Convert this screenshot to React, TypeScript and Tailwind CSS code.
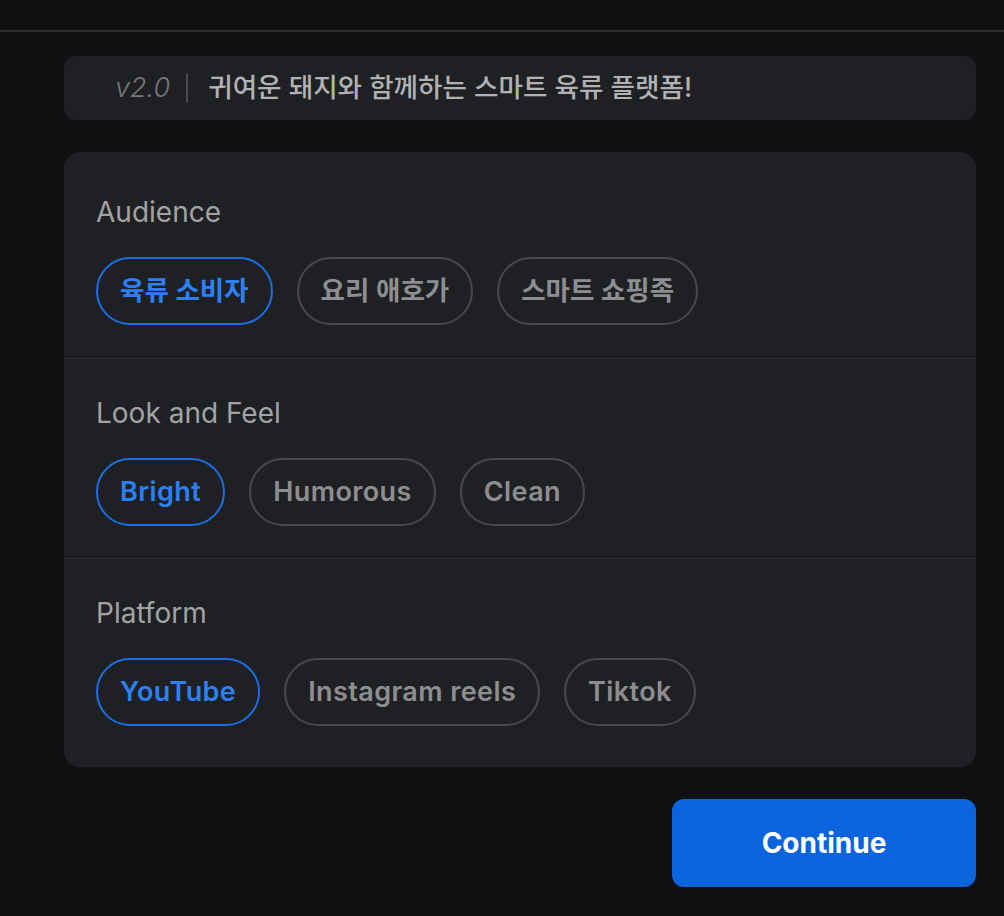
import { useState } from 'react';

const FONT = "font-['Inter','Noto_Sans_CJK_KR',sans-serif]";

const GROUPS = [
  { label: 'Audience', options: ['육류 소비자', '요리 애호가', '스마트 쇼핑족'] },
  { label: 'Look and Feel', options: ['Bright', 'Humorous', 'Clean'] },
  { label: 'Platform', options: ['YouTube', 'Instagram reels', 'Tiktok'] },
];

function Chip({ text, active, onClick }: { text: string; active: boolean; onClick: () => void }) {
  // hangul labels run a touch wider than latin ones at the same size
  const korean = /[가-힣]/.test(text);
  const size = korean ? 'text-[26.5px] font-semibold' : 'text-[27px] font-semibold tracking-[0.4px]';
  return (
    <button
      onClick={onClick}
      className={
        active
          ? `h-[68px] rounded-full border-2 border-[#1a6fe6] px-[22px] ${size} text-[#2b80f5]`
          : `h-[68px] rounded-full border-2 border-[#48494c] px-[22px] ${size} text-[#8d8e90]`
      }
    >
      {text}
    </button>
  );
}

export default function App() {
  const [picked, setPicked] = useState<number[]>([0, 0, 0]);

  return (
    <div className={`${FONT} min-h-[916px] w-full bg-[#0e1012]`}>
      <div className="h-[32px] border-b-2 border-[#2a2c2f]" />

      <div className="flex flex-col gap-8 pl-[64px] pr-[28px] pt-[24px]">
        <div className="flex h-[64px] items-center rounded-xl bg-[#1f2023] pl-[51px]">
          <span className="text-[27px] italic font-light text-[#77787a]">v2.0</span>
          <span className="ml-[16px] mr-[20px] h-[30px] w-[2px] bg-[#4a4b4e]" />
          <span className="text-[26.6px] font-medium text-[#b1b2b4]">귀여운 돼지와 함께하는 스마트 육류 플랫폼!</span>
        </div>

        <div className="rounded-2xl bg-[#1f2023] pt-[6px] pb-[9px]">
          {GROUPS.map((g, gi) => (
            <div
              key={g.label}
              className={
                gi === 0
                  ? 'px-8 pt-[38px] pb-[33px]'
                  : 'border-t border-[#2f3134] px-8 pt-[38px] pb-[32px]'
              }
            >
              <div className="h-8 text-[28px] leading-8 text-[#a2a3a5]">{g.label}</div>
              <div className="mt-[29px] flex gap-6">
                {g.options.map((o, oi) => (
                  <Chip
                    key={o}
                    text={o}
                    active={picked[gi] === oi}
                    onClick={() => setPicked(picked.map((p, i) => (i === gi ? oi : p)))}
                  />
                ))}
              </div>
            </div>
          ))}
        </div>

        <div className="flex justify-end">
          <button className="h-[88px] w-[304px] rounded-xl bg-[#0b63de] text-[28px] font-bold text-white">
            Continue
          </button>
        </div>
      </div>
    </div>
  );
}
